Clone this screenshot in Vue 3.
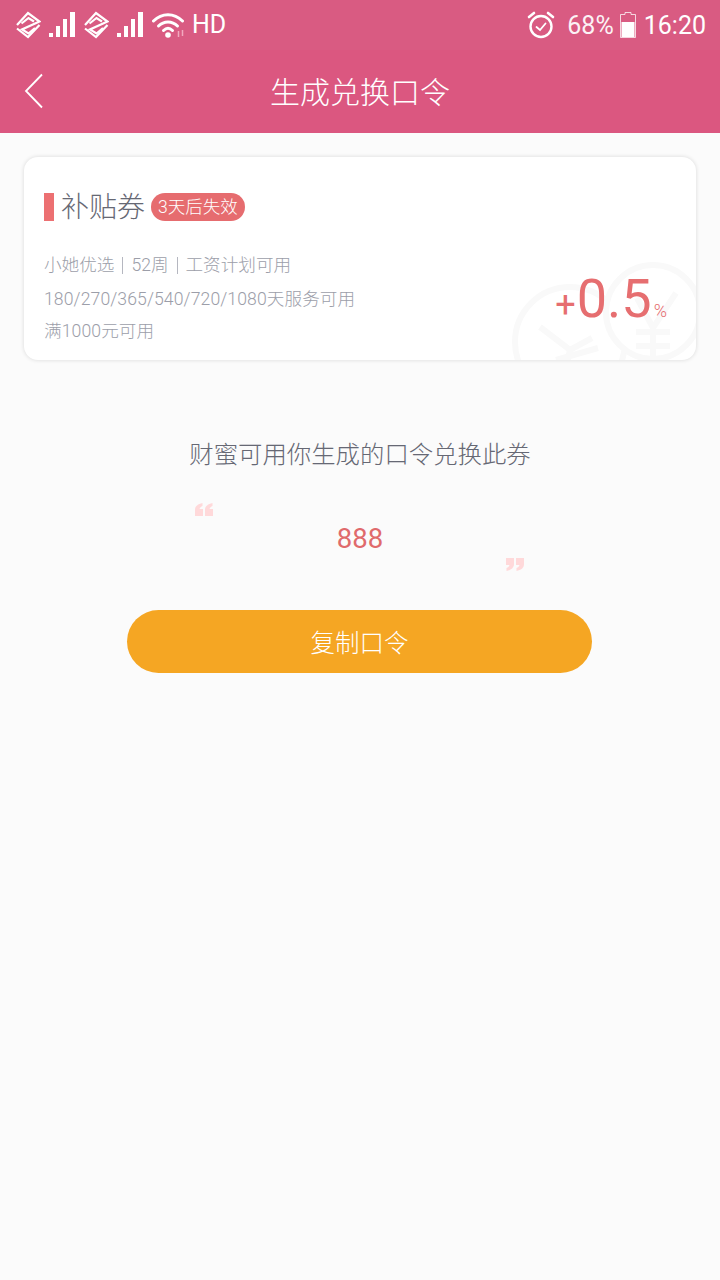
<script setup>
const meta = ['180/270/365/540/720/1080天服务可用', '满1000元可用']
</script>

<template>
  <div class="page">
    <header class="top">
      <div class="status">
        <div class="status__left">
          <svg class="icon-cm" viewBox="0 0 26 28" fill="none" stroke="#fff" stroke-width="2.200" aria-hidden="true">
            <path d="M2 14 13 2 24.500 10.500 7 18.500 13.500 22.500 20 17" />
            <path d="M2 17.500 13 26 24.500 14" />
            <path d="M6.500 12.500 13.500 7 19 10.500" />
          </svg>
          <svg class="icon-signal" viewBox="0 0 26 26" fill="#fff" aria-hidden="true">
            <rect x="0" y="21" width="4" height="4" />
            <rect x="7" y="14" width="4" height="11" />
            <rect x="14" y="7" width="4" height="18" />
            <rect x="21" y="0" width="5" height="25" />
          </svg>
          <svg class="icon-cm" viewBox="0 0 26 28" fill="none" stroke="#fff" stroke-width="2.200" aria-hidden="true">
            <path d="M2 14 13 2 24.500 10.500 7 18.500 13.500 22.500 20 17" />
            <path d="M2 17.500 13 26 24.500 14" />
            <path d="M6.500 12.500 13.500 7 19 10.500" />
          </svg>
          <svg class="icon-signal" viewBox="0 0 26 26" fill="#fff" aria-hidden="true">
            <rect x="0" y="21" width="4" height="4" />
            <rect x="7" y="14" width="4" height="11" />
            <rect x="14" y="7" width="4" height="18" />
            <rect x="21" y="0" width="5" height="25" />
          </svg>
          <svg class="icon-wifi" viewBox="0 0 34 26" fill="none" stroke="#fff" stroke-width="3" stroke-linecap="round" aria-hidden="true">
            <path d="M1.500 9C10 .500 22 .500 30.500 9" />
            <path d="M6.500 14C12 8.500 20 8.500 25.500 14" />
            <path d="M11.500 18.500C14.500 15.500 17.500 15.500 20.500 18.500" />
            <circle cx="16" cy="23" r="2.800" fill="#fff" stroke="none" />
            <path d="M26.500 19v6M30.500 18v6" stroke="#f2a9bf" stroke-width="1.500" stroke-linecap="butt" />
          </svg>
          <span class="status__hd">HD</span>
        </div>
        <div class="status__right">
          <svg class="icon-alarm" viewBox="0 0 28 28" fill="none" stroke="#fff" stroke-linecap="round" aria-hidden="true">
            <circle cx="14" cy="15.500" r="10.500" stroke-width="2.400" />
            <path d="M9.500 16 13 19 18.500 12.500" stroke-width="1.800" />
            <path d="M2 6 7 2M26 6 21 2" stroke-width="2.600" />
          </svg>
          <span class="status__pct">68%</span>
          <svg class="icon-battery" viewBox="0 0 16 26" aria-hidden="true">
            <path d="M5 .500h6v2h4.500v23H.500v-23H5z" fill="none" stroke="#fff" stroke-opacity=".75" />
            <rect x="1.500" y="10" width="13" height="15" fill="#fff" />
          </svg>
          <span class="status__time">16:20</span>
        </div>
      </div>
      <nav class="nav">
        <svg class="nav__back" viewBox="0 0 20 36" fill="none" stroke="#fff" stroke-width="1.800" aria-hidden="true">
          <path d="M18 1.500 2 18l16 16.500" />
        </svg>
        <h1 class="nav__title">生成兑换口令</h1>
      </nav>
    </header>

    <main class="main">
      <section class="card">
        <div class="card__head">
          <span class="card__mark"></span>
          <span class="card__name">补贴券</span>
          <span class="card__tag">3天后失效</span>
        </div>
        <div class="card__meta">
          <p class="card__line card__line--first">
            小她优选<i class="card__sep"></i>52周<i class="card__sep"></i>工资计划可用
          </p>
          <p v-for="line in meta" :key="line" class="card__line">{{ line }}</p>
        </div>
        <svg class="card__water" viewBox="0 0 190 110" fill="none" stroke="#f9f9f9" stroke-width="6" aria-hidden="true">
          <circle cx="64" cy="92" r="55" />
          <path d="M34 77 64 100 86 88M60 118 64 100M50 110 92 98" />
          <circle cx="147" cy="62" r="47" fill="#fff" />
          <path d="M131 48 147 78 170 43M130 82h34M130 96h34M147 78v32" />
        </svg>
        <div class="card__rate">
          <span class="card__plus">+</span><span class="card__num">0.5</span><span class="card__unit">%</span>
        </div>
      </section>

      <p class="hint">财蜜可用你生成的口令兑换此券</p>

      <div class="code">
        <svg class="code__quote code__quote--open" viewBox="0 0 18 13" aria-hidden="true">
          <path d="M0 13V7C0 3 3 1 7.500 0V3C6 3.500 5 4.500 4.500 6H8V13ZM10 13V7C10 3 13 1 17.500 0V3C16 3.500 15 4.500 14.500 6H18V13Z" />
        </svg>
        <span class="code__value">888</span>
        <svg class="code__quote code__quote--close" viewBox="0 0 18 13" aria-hidden="true">
          <path d="M18 0V6C18 10 15 12 10.500 13V10C12 9.500 13 8.500 13.500 7H10V0ZM8 0V6C8 10 5 12 .500 13V10C2 9.500 3 8.500 3.500 7H0V0Z" />
        </svg>
      </div>

      <button class="copy" type="button">复制口令</button>
    </main>
  </div>
</template>

<style>
html,
body {
  margin: 0;
  background: #fbfbfb;
}
</style>

<style scoped>
.page {
  min-height: 1280px;
  background: #fbfbfb;
  font-family: Roboto, 'Noto Sans CJK SC', sans-serif;
}

.top {
  background: #db5780;
  color: #fff;
}

.status {
  display: flex;
  align-items: center;
  justify-content: space-between;
  height: 50px;
  padding: 0 14px 0 15px;
  background: #d95b82;
  box-sizing: border-box;
}

.status__left,
.status__right {
  display: flex;
  align-items: center;
}

.icon-cm {
  width: 26px;
  height: 28px;
}

.icon-signal {
  width: 26px;
  height: 26px;
  margin: 0 8px;
}

.icon-wifi {
  width: 34px;
  height: 26px;
  margin-left: 1px;
}

.status__hd {
  margin-left: 6px;
  font-size: 25px;
  line-height: 28px;
}

.icon-alarm {
  width: 28px;
  height: 28px;
}

.status__pct {
  margin-left: 12px;
  font-size: 25px;
  opacity: 0.92;
}

.icon-battery {
  width: 16px;
  height: 26px;
  margin-left: 6px;
}

.status__time {
  margin-left: 8px;
  font-size: 25px;
}

.nav {
  position: relative;
  display: flex;
  align-items: center;
  justify-content: center;
  height: 83px;
  padding-bottom: 3px;
  box-sizing: border-box;
}

.nav__back {
  position: absolute;
  left: 24px;
  top: 23px;
  width: 20px;
  height: 36px;
}

.nav__title {
  margin: 0;
  font-size: 30px;
  font-weight: 300;
}

.main {
  display: flex;
  flex-direction: column;
  align-items: center;
  padding: 24px 24px 0;
}

.card {
  position: relative;
  align-self: stretch;
  height: 203px;
  padding: 36px 20px 0;
  box-sizing: border-box;
  overflow: hidden;
  background: #fff;
  border-radius: 14px;
  box-shadow: 0 0 4px rgb(0 0 0 / 0.14);
}

.card__head {
  display: flex;
  align-items: center;
  height: 28px;
}

.card__mark {
  width: 10px;
  height: 28px;
  background: #ec7072;
}

.card__name {
  margin-left: 7px;
  padding-top: 2px;
  color: #666874;
  font-size: 28px;
  font-weight: 300;
  line-height: 28px;
}

.card__tag {
  margin-left: 6px;
  padding: 0 7px;
  height: 28px;
  border-radius: 14px;
  background: #e66c6f;
  color: #fff;
  font-size: 17.500px;
  font-weight: 300;
  line-height: 28px;
}

.card__meta {
  margin-top: 26px;
}

.card__line {
  margin: 0;
  color: #9c9ea9;
  font-size: 17.600px;
  font-weight: 300;
  letter-spacing: 0.1px;
  line-height: 32px;
}

.card__line--first {
  display: flex;
  align-items: center;
  letter-spacing: 0;
  line-height: 36px;
}

.card__sep {
  width: 1px;
  height: 17px;
  margin: 0 8px;
  background: #b5b7c0;
}

.card__water {
  position: absolute;
  right: 0;
  bottom: 0;
  width: 190px;
  height: 110px;
}

.card__rate {
  position: absolute;
  right: 29px;
  top: 112px;
  display: flex;
  align-items: baseline;
  color: #e66e70;
  line-height: 60px;
}

.card__plus {
  margin-right: 1px;
  font-size: 36px;
}

.card__num {
  font-size: 54px;
}

.card__unit {
  margin-left: 2px;
  font-size: 18px;
  font-weight: 300;
}

.hint {
  margin: 77px 0 0;
  color: #666874;
  font-size: 24.400px;
  font-weight: 300;
  line-height: 36px;
}

.code {
  position: relative;
  align-self: stretch;
  height: 92px;
  margin-top: 20px;
  text-align: center;
}

.code__value {
  display: block;
  padding-top: 29px;
  color: #e06a6c;
  font-size: 27.500px;
  line-height: 34px;
}

.code__quote {
  position: absolute;
  width: 18px;
  height: 13px;
  fill: #ffd9da;
}

.code__quote--open {
  left: 171px;
  top: 10px;
}

.code__quote--close {
  left: 482px;
  top: 65px;
}

.copy {
  width: 465px;
  height: 63px;
  margin: 25px 0 0 -1px;
  padding: 0;
  border: 0;
  border-radius: 32px;
  background: #f5a623;
  color: #fff;
  font-family: inherit;
  font-size: 24.500px;
  font-weight: 300;
}
</style>
